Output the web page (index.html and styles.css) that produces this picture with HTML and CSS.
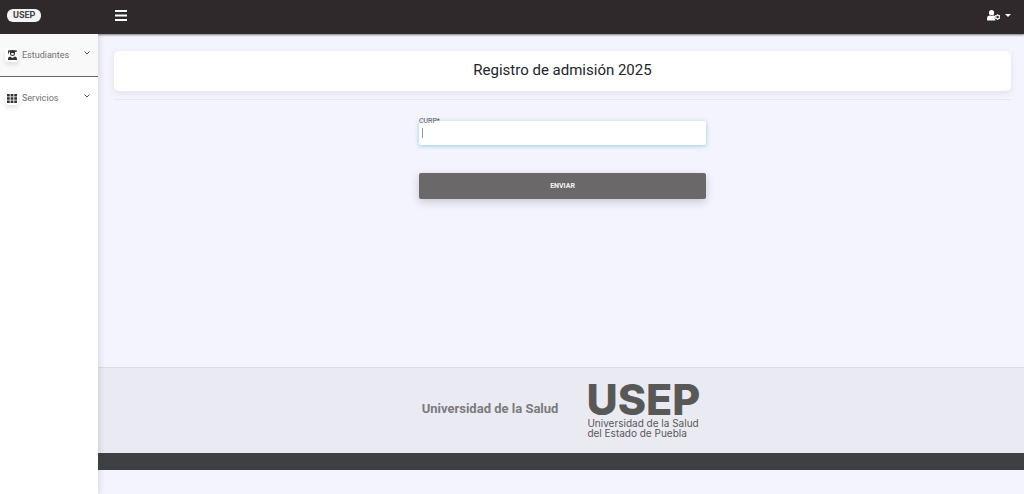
FILE: index.html
```html
<!DOCTYPE html>
<html lang="es">
<head>
<meta charset="utf-8">
<meta name="viewport" content="width=device-width, initial-scale=1">
<title>Registro de admisión 2025</title>
<link rel="stylesheet" href="styles.css">
</head>
<body>
<header class="topbar">
  <div class="topbar-brand"><a class="brand" href="#">USEP</a></div>
  <button class="icon-button" type="button" aria-label="Menú">
    <svg width="12" height="11" viewBox="0 0 12 11" fill="currentColor"><path d="M0 0h12v2H0zM0 4.500h12v2H0zM0 9h12v2H0z"/></svg>
  </button>
  <button class="icon-button user-menu" type="button" aria-label="Cuenta">
    <svg width="13" height="11" viewBox="0 0 640 530" fill="currentColor"><path d="M224 256a128 128 0 1 0 0-256 128 128 0 0 0 0 256zM134 270C60 270 0 330 0 404v60c0 27 21 48 48 48h352c9 0 17-2 24-7-20-24-36-50-45-78-8-26 3-48 27-62-9-17-9-42 2-58-20-25-45-37-71-37h-23c-53 24-127 24-180 0z"/><path fill-rule="evenodd" d="M490 200h62l9 42 25 14 40-13 30 52-31 29v38l31 29-30 52-40-13-25 14-9 42h-62l-9-42-25-14-40 13-30-52 31-29v-38l-31-29 30-52 40 13 25-14zM521 283a60 60 0 1 0 0 120 60 60 0 0 0 0-120z"/></svg>
    <span class="caret"></span>
  </button>
</header>
<div class="shell">
  <nav class="sidebar">
    <a class="nav-item nav-item-active" href="#">
      <span class="nav-icon"><svg width="9" height="10" viewBox="0 0 18 20" fill="currentColor"><path d="M0 1l9-1 9 1v2l-4 1v3q0 5-5 5T4 7V4L2 3.500V7H0zM6 6v1q0 3 3 3t3-3V6q-3 1-6 0zM4 13l5 3 5-3q4 1 4 4v3H0v-3q0-3 4-4z"/></svg></span>
      <span>Estudiantes</span>
      <svg class="chevron" width="6" height="4" viewBox="0 0 6 4"><path d="M.5.5 3 3 5.500.5"/></svg>
    </a>
    <a class="nav-item" href="#">
      <span class="nav-icon"><svg width="10" height="9" viewBox="0 0 20 18" fill="currentColor"><path d="M0 0h5.500v5H0zM7.200 0h5.600v5H7.200zM14.500 0H20v5h-5.500zM0 6.500h5.500v5H0zM7.200 6.500h5.600v5H7.200zM14.500 6.500H20v5h-5.500zM0 13h5.500v5H0zM7.200 13h5.600v5H7.200zM14.500 13H20v5h-5.500z"/></svg></span>
      <span>Servicios</span>
      <svg class="chevron" width="6" height="4" viewBox="0 0 6 4"><path d="M.5.5 3 3 5.500.5"/></svg>
    </a>
  </nav>
  <div class="page">
    <main class="content">
      <h1 class="title-card">Registro de admisión 2025</h1>
      <hr class="divider">
      <form class="form">
        <label class="field-label" for="curp">CURP*</label>
        <input class="field" id="curp" name="curp" type="text" autofocus>
        <button class="submit" type="submit">ENVIAR</button>
      </form>
    </main>
    <footer class="footer">
      <span class="footer-name">Universidad de la Salud</span>
      <div class="logo">
        <span class="logo-mark">USEP</span>
        <span class="logo-text">Universidad de la Salud<br>del Estado de Puebla</span>
      </div>
    </footer>
    <div class="footer-bar"></div>
  </div>
</div>
</body>
</html>
```
FILE: styles.css
```css
* { box-sizing: border-box; }
body {
  margin: 0;
  min-height: 100vh;
  display: flex;
  flex-direction: column;
  background: #f3f4fd;
  color: #212529;
  font: 9px/12px Roboto, sans-serif;
}
button, input { font: inherit; }
a { color: inherit; text-decoration: none; }
.topbar {
  position: relative;
  display: flex;
  align-items: center;
  height: 34px;
  padding: 0 13px 3px 0;
  background: #30292c;
  color: #fff;
  box-shadow: 0 1px 2px rgba(48, 41, 44, .6);
}
.topbar-brand { width: 114px; padding-left: 7px; }
.brand {
  display: inline-block;
  padding: 0 6px;
  border-radius: 6px;
  background: #f4f4f5;
  color: #454043;
  font-weight: 700;
  line-height: 13px;
}
.icon-button {
  display: flex;
  align-items: center;
  gap: 5px;
  padding: 1px;
  border: 0;
  background: none;
  color: #fff;
}
.user-menu { margin-left: auto; padding: 0; }
.caret {
  border: 3px solid transparent;
  border-top-color: #fff;
  border-bottom: 0;
}
.shell { flex: 1; display: flex; }
.sidebar {
  position: relative;
  flex: none;
  width: 98px;
  background: #fff;
  box-shadow: 1px 0 6px rgba(60, 60, 90, .18);
}
.nav-item {
  display: flex;
  align-items: center;
  height: 42px;
  padding: 0 8px 0 5px;
  color: #6e6e70;
}
.nav-item-active {
  height: 43px;
  background: #f9f9f9;
  border-bottom: 1px solid #666;
}
.nav-icon {
  display: grid;
  place-items: center;
  width: 14px;
  height: 14px;
  margin-right: 3px;
  border-radius: 4px;
  background: #fff;
  color: #333;
  box-shadow: 0 3px 4px rgba(0, 0, 0, .1);
}
.chevron {
  margin: 0 0 5px auto;
  fill: none;
  stroke: #555;
}
.page { flex: 1; min-width: 0; }
.content { min-height: 333px; padding: 17px 13px 0 16px; }
.title-card {
  margin: 0;
  padding: 7px 8px 9px;
  border-radius: 5px;
  background: #fff;
  box-shadow: 0 2px 6px rgba(60, 60, 90, .1);
  font-size: 15px;
  font-weight: 400;
  line-height: 24px;
  text-align: center;
}
.divider { margin: 8px 0 0; border: 0; border-top: 1px solid #e6e7f0; }
.form {
  display: flex;
  flex-direction: column;
  width: 32%;
  margin: 17px auto 0;
}
.field-label {
  z-index: 1;
  height: 4px;
  color: #555;
  font-size: 7px;
  line-height: 8px;
}
.field {
  height: 24px;
  padding: 0 4px;
  border: 0;
  border-radius: 2px;
  outline: 0;
  background: #fff linear-gradient(#999, #999) 3px 7px / 1px 10px no-repeat;
  caret-color: transparent;
  box-shadow: 0 1px 4px rgba(90, 175, 205, .6);
}
.submit {
  height: 26px;
  margin-top: 28px;
  border: 0;
  border-radius: 2px;
  background: #6a6869;
  color: #f5f5f5;
  box-shadow: 0 3px 8px rgba(60, 60, 80, .24);
  font-size: 7px;
  font-weight: 700;
}
.footer {
  display: flex;
  justify-content: center;
  align-items: center;
  gap: 28px;
  height: 86px;
  padding-bottom: 3px;
  border-top: 1px solid #dcdce3;
  background: #eaeaf3;
}
.footer-name { color: #7b7b7d; font-size: 13px; font-weight: 700; }
.logo { display: flex; flex-direction: column; color: #585957; }
.logo-mark { font: 800 43px/36px Inter, sans-serif; }
.logo-text {
  padding: 1px 0 0 1px;
  font: 10px/10px Inter, sans-serif;
}
.footer-bar { height: 17px; background: #3d4144; }
```
